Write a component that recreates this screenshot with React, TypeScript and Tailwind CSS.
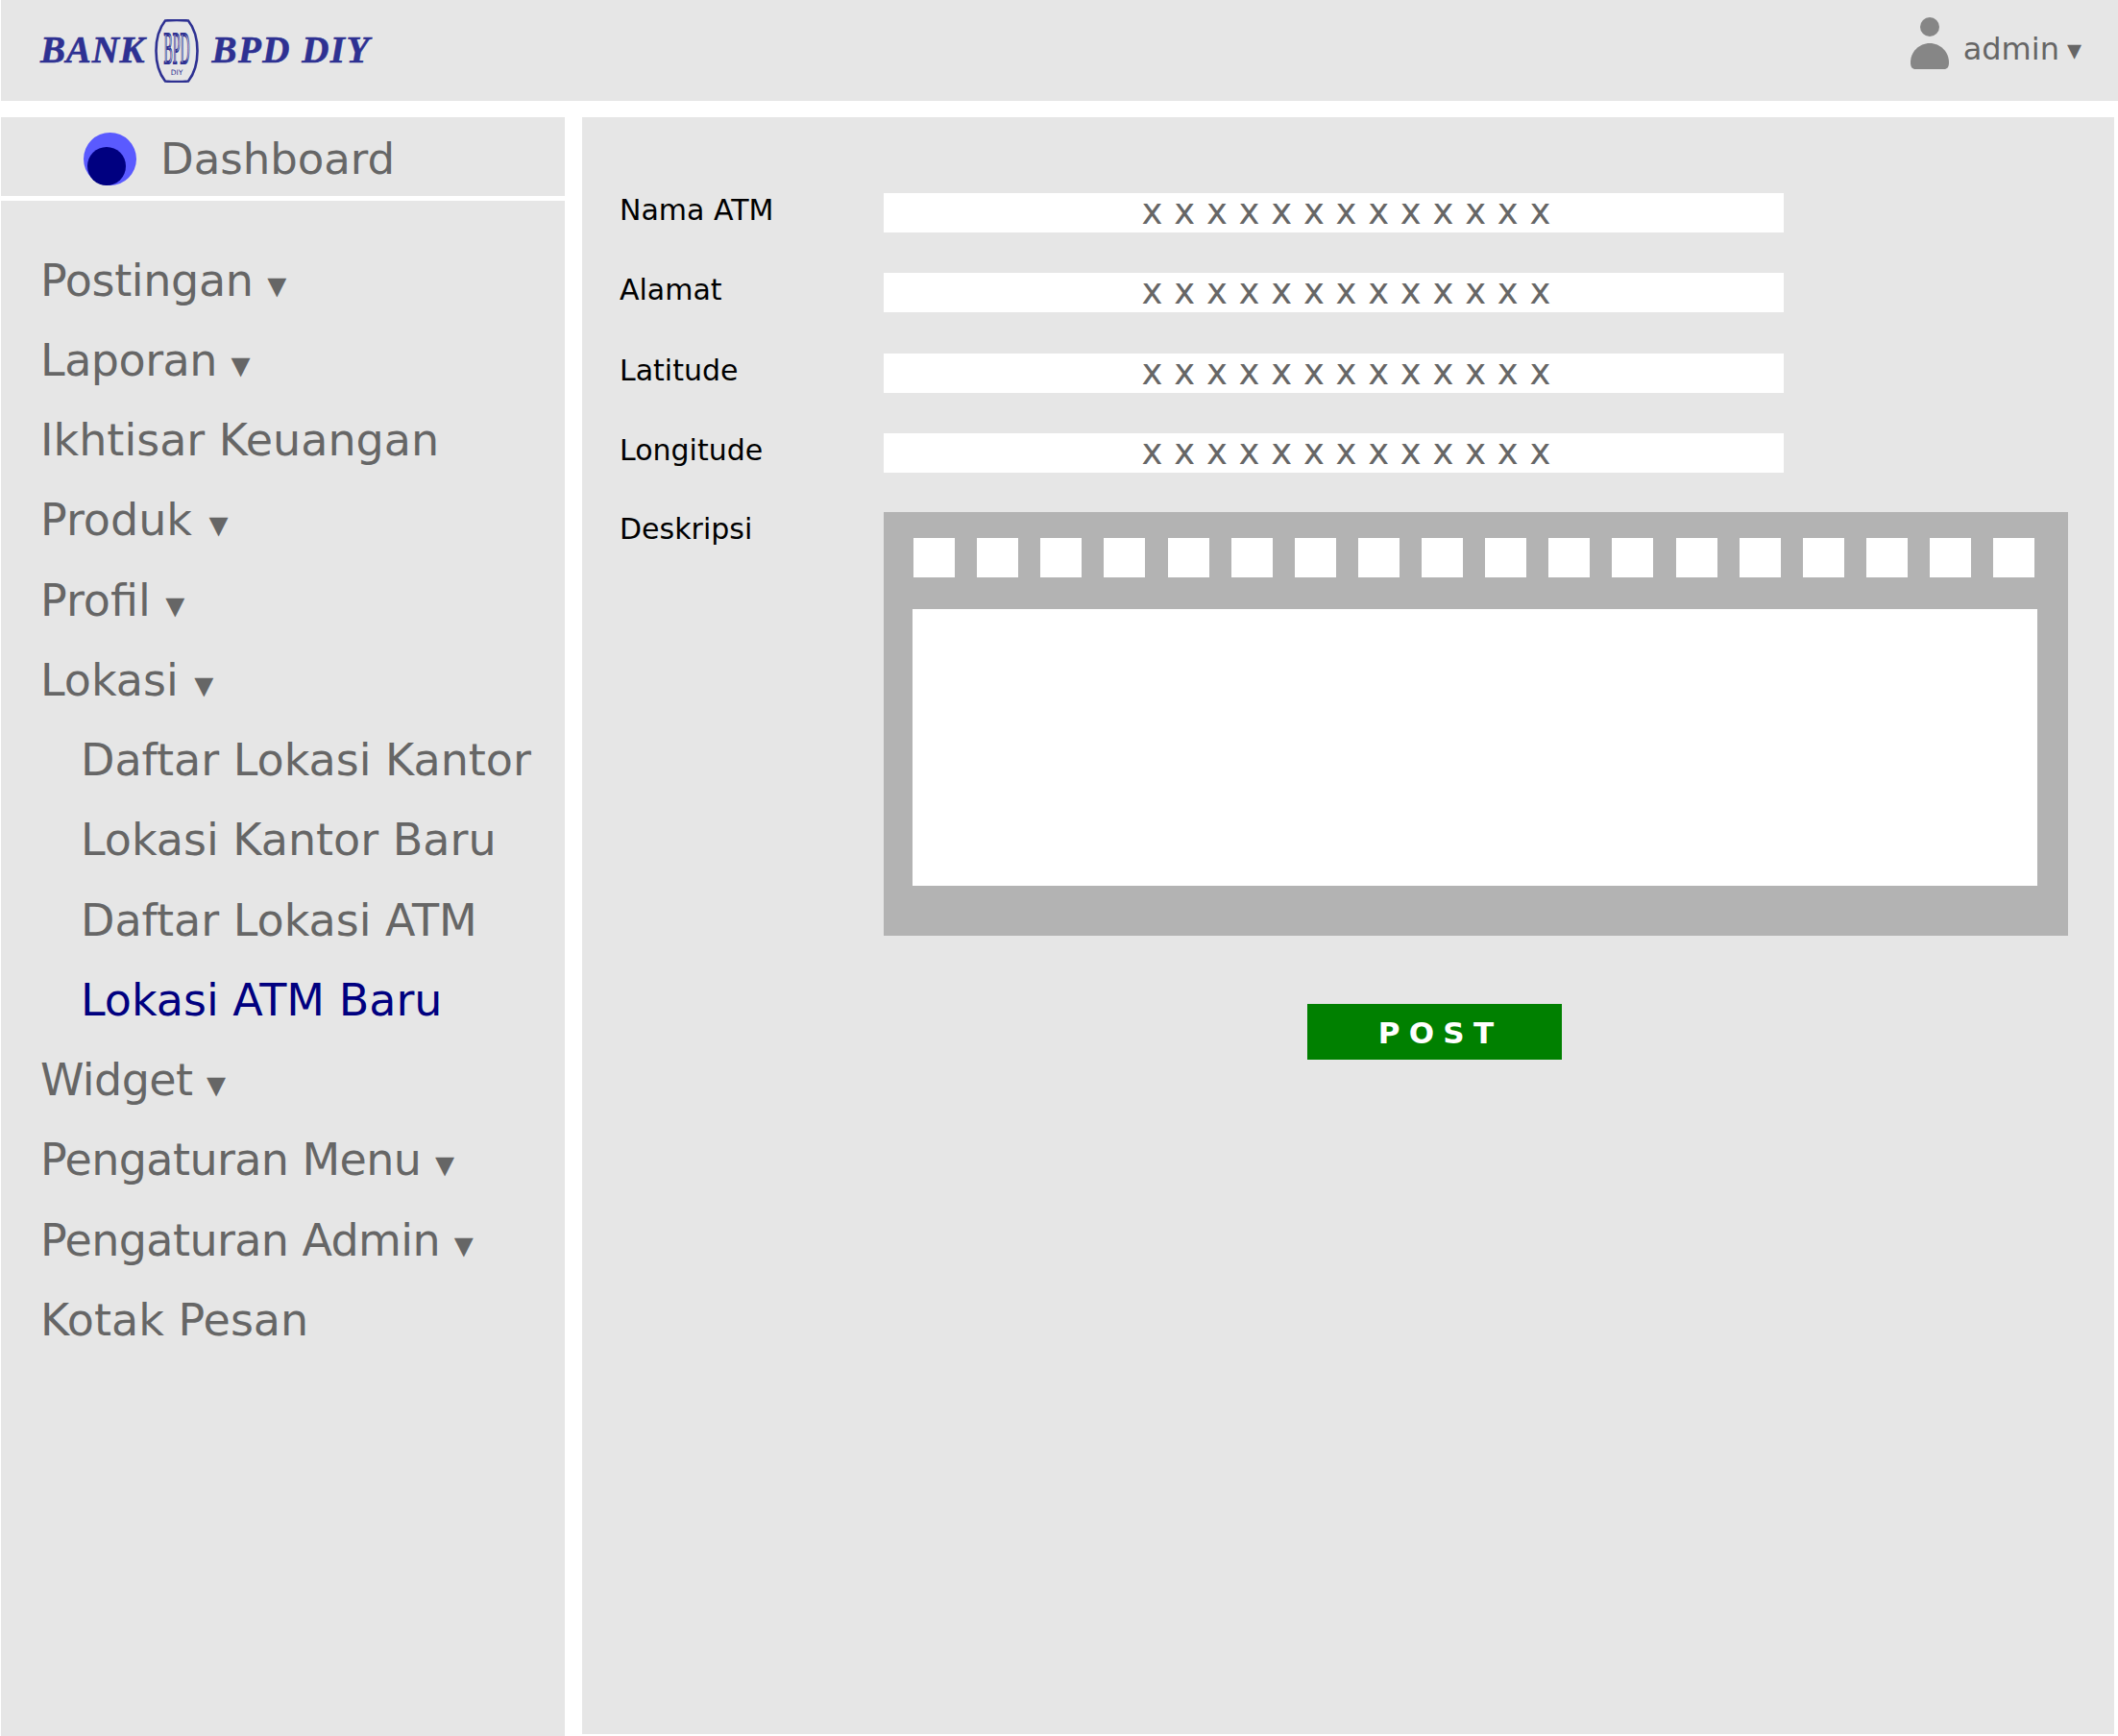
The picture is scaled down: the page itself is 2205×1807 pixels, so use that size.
const menu = [
  { label: "Postingan", caret: true, track: "tracking-[-0.35px]" },
  { label: "Laporan", caret: true, track: "tracking-[-0.5px]" },
  { label: "Ikhtisar Keuangan" },
  { label: "Produk", caret: true, track: "mr-[3px]" },
  { label: "Profil", caret: true, track: "mr-[1px]" },
  { label: "Lokasi", caret: true, track: "mr-[2px]" },
  { label: "Daftar Lokasi Kantor", sub: true },
  { label: "Lokasi Kantor Baru", sub: true },
  { label: "Daftar Lokasi ATM", sub: true },
  { label: "Lokasi ATM Baru", sub: true, active: true },
  { label: "Widget", caret: true, track: "tracking-[-0.6px]" },
  { label: "Pengaturan Menu", caret: true, track: "tracking-[-0.6px]" },
  { label: "Pengaturan Admin", caret: true, track: "tracking-[-0.6px]" },
  { label: "Kotak Pesan" },
];

const fields = ["Nama ATM", "Alamat", "Latitude", "Longitude"];
const toolbar = Array.from({ length: 18 }, (_, i) => i);

function Emblem() {
  return (
    <svg width="46" height="66" viewBox="0 0 46 66" className="shrink-0 ml-[10px]">
      <path
        d="M11 1.5 C18 0.8 28 0.8 35 1.5 C41 9 44.5 21 44.5 33 C44.5 45 41 57 35 64.5 C28 65.2 18 65.2 11 64.5 C5 57 1.5 45 1.5 33 C1.5 21 5 9 11 1.5 Z"
        fill="none"
        stroke="#2e3192"
        strokeWidth="2.6"
      />
      <text
        transform="translate(23 46) scale(0.3 1)"
        textAnchor="middle"
        fontFamily="'Liberation Serif', serif"
        fontSize="46"
        fill="none"
        stroke="#2e3192"
        strokeWidth="2"
      >
        BPD
      </text>
      <text x="23" y="58" textAnchor="middle" fontFamily="'DejaVu Sans', sans-serif" fontSize="7.5" fill="#2e3192">
        DIY
      </text>
    </svg>
  );
}

function UserIcon() {
  return (
    <svg width="40" height="54" viewBox="0 0 40 54" className="shrink-0 self-start mt-[18px]">
      <circle cx="20" cy="10" r="10" fill="#868686" />
      <path d="M0 47 C0 36 9 27 20 27 C31 27 40 36 40 47 C40 52 38 54 35 54 H5 C2 54 0 52 0 47 Z" fill="#868686" />
    </svg>
  );
}

const logoText =
  "font-['Liberation_Serif',serif] italic font-bold text-[39px] text-[#2e3192] [-webkit-text-stroke:0.6px_#2e3192]";

export default function App() {
  return (
    <div className="w-[2205px] h-[1807px] bg-white overflow-hidden flex flex-col font-['DejaVu_Sans',sans-serif]">
      <header className="ml-px h-[105px] shrink-0 bg-[#e6e6e6] flex items-center justify-between pl-[41px] pr-[38px]">
        <div className="flex items-center">
          <span className={`${logoText} tracking-[0.8px]`}>BANK</span>
          <Emblem />
          <span className={`${logoText} tracking-[1.5px] ml-[13px]`}>BPD DIY</span>
        </div>
        <div className="flex items-center h-full gap-[15px] text-[32px] text-[#666666]">
          <UserIcon />
          <span className="pb-[4px]">admin<span className="ml-[8px] text-[30px]">▾</span></span>
        </div>
      </header>

      <div className="flex flex-1 mt-[17px] ml-px gap-[18px]">
        <aside className="w-[587px] flex flex-col gap-[5px]">
          <div className="h-[82px] shrink-0 bg-[#e6e6e6] flex items-center pl-[86px] pt-[5px] gap-[25px] text-[45px] text-[#666666]">
            <div className="relative w-[55px] h-[55px] rounded-full bg-[#5a5aff]">
              <div className="absolute left-[4px] bottom-0 w-[40px] h-[40px] rounded-full bg-[#000080]" />
            </div>
            <span>Dashboard</span>
          </div>
          <nav className="flex-1 bg-[#e6e6e6] pt-[41.5px] pl-[41px] text-[46px] text-[#666666]">
            {menu.map((item) => (
              <div
                key={item.label}
                className={`h-[83.25px] leading-[83.25px] whitespace-nowrap ${item.sub ? "pl-[42px]" : ""} ${item.active ? "text-[#000080]" : ""}`}
              >
                <span className={item.track ?? ""}>{item.label}</span>
                {item.caret && (
                  <>
                    {" "}
                    <span className="relative top-[2px] text-[40px] leading-none">▾</span>
                  </>
                )}
              </div>
            ))}
          </nav>
        </aside>

        <main className="w-[1595px] h-[1683px] bg-[#e6e6e6] pt-[79px] pl-[39px]">
          <div className="flex flex-col gap-[42.33px]">
            {fields.map((name) => (
              <div key={name} className="flex h-[41px]">
                <label className="w-[275px] text-[30px] leading-[36px] text-black">{name}</label>
                <div className="w-[937px] h-[41px] bg-white pl-[26px] flex justify-center text-[37px] leading-[39px] text-[#666666]">
                  x x x x x x x x x x x x x
                </div>
              </div>
            ))}
          </div>
          <div className="flex mt-[41px]">
            <label className="w-[275px] text-[30px] leading-[36px] text-black">Deskripsi</label>
            <div>
              <div className="w-[1233px] h-[441px] bg-[#b3b3b3] pt-[27px]">
                <div className="flex gap-[23.14px] pl-[31px]">
                  {toolbar.map((i) => (
                    <div key={i} className="w-[43px] h-[41px] bg-white" />
                  ))}
                </div>
                <div className="ml-[30px] mt-[33px] w-[1171px] h-[288px] bg-white" />
              </div>
              <button className="block ml-[441px] mt-[71px] w-[265px] h-[58px] pl-[12px] pt-[3px] bg-[#008000] text-white font-bold text-[31px] tracking-[0.3em] text-center">
                POST
              </button>
            </div>
          </div>
        </main>
      </div>
    </div>
  );
}
